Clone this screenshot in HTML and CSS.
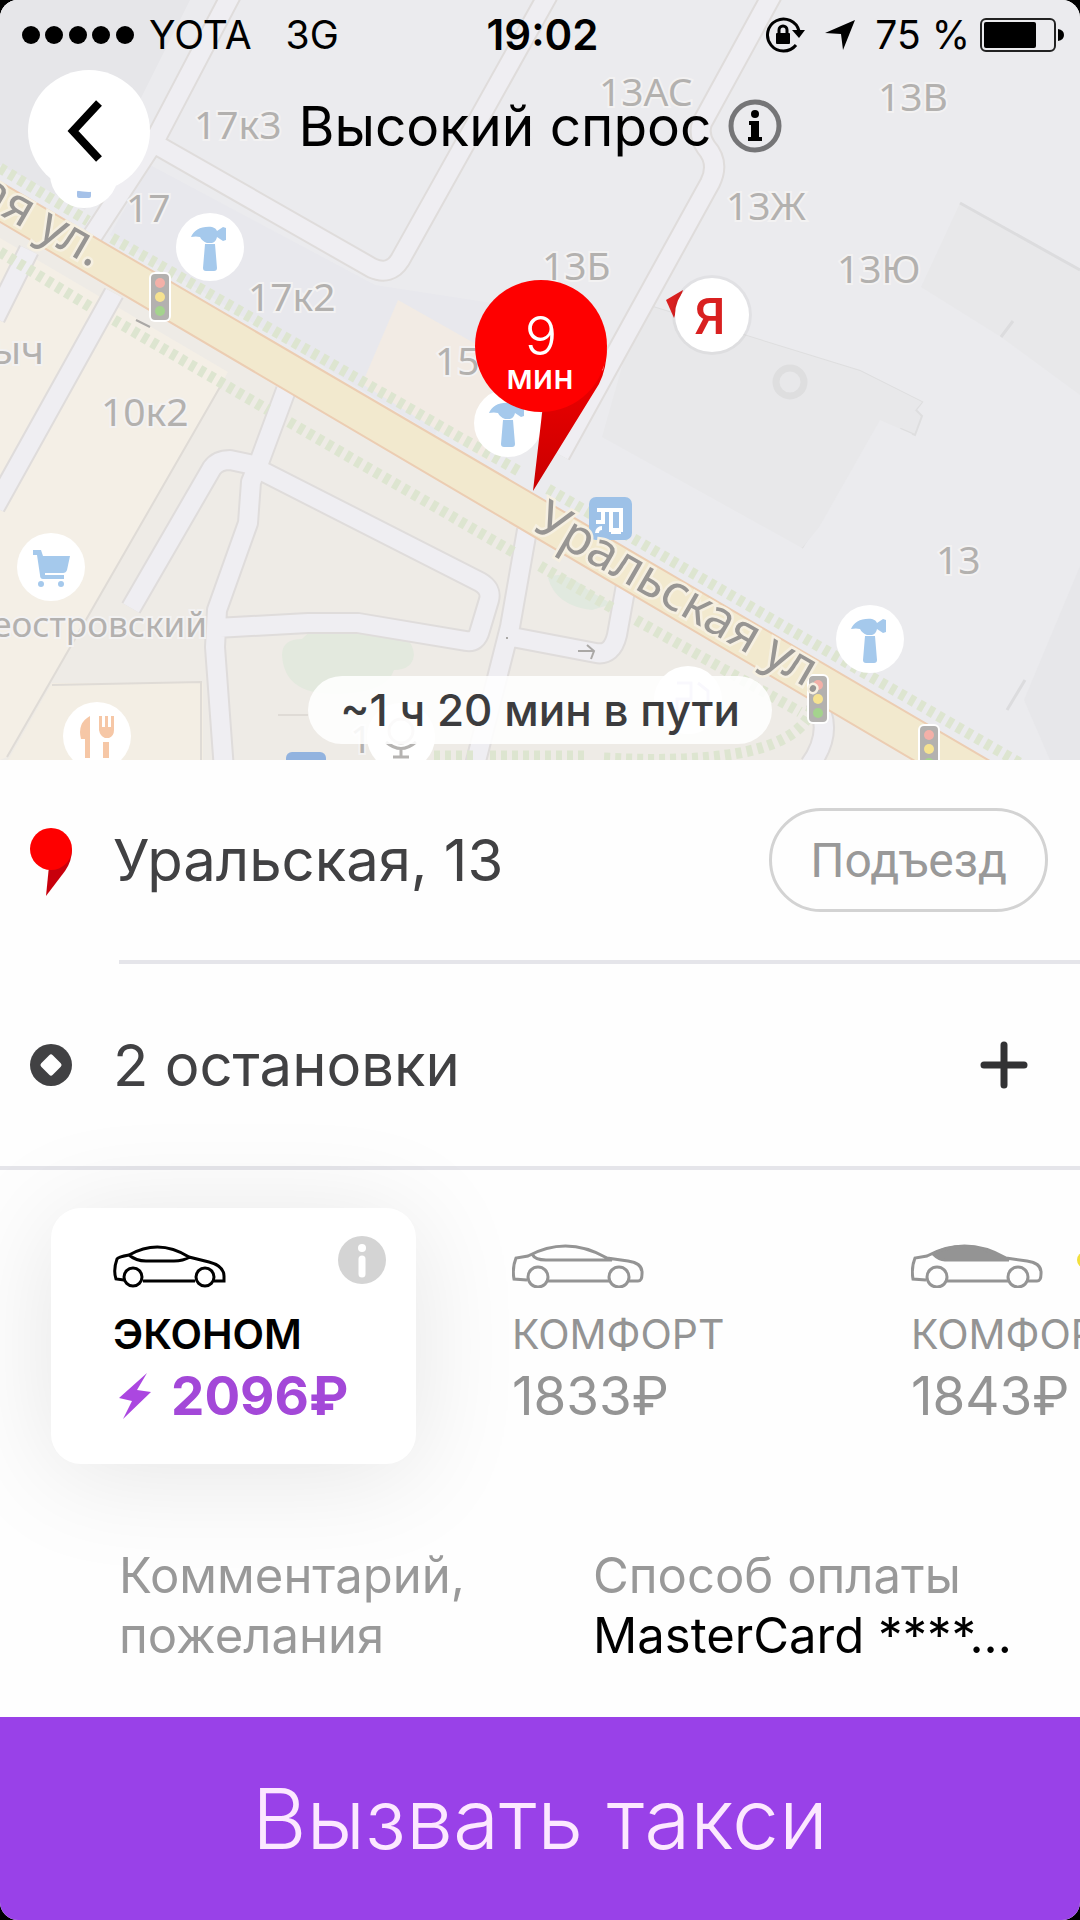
FILE: index.html
```html
<!DOCTYPE html>
<html lang="ru">
<head>
<meta charset="utf-8">
<meta name="viewport" content="width=device-width, initial-scale=1">
<title>Вызвать такси</title>
<link rel="stylesheet" href="styles.css">
</head>
<body>
<div class="app">
  <section class="map">
    <svg class="map__canvas" viewBox="0 0 1080 760" preserveAspectRatio="xMidYMid slice" aria-label="Карта">
      <defs>
        <symbol id="hammer" viewBox="-34 -34 68 68">
          <circle r="34" fill="#fff"/>
          <path fill="#a5c9ec" d="M-19-10C-16-17-9-21 2-20q4 1 5 4l6-4 3 1v12l-3 1-6-4q-1 5-5 6h-5q-5-2-7-6-4-1-9 0zM-5-3H5L7 21q0 3-3 3h-8q-3 0-3-3z"/>
        </symbol>
        <symbol id="light" viewBox="0 0 24 52">
          <rect x="1" y="1" width="22" height="50" rx="6" fill="#fff"/>
          <rect x="3" y="3" width="18" height="46" rx="4" fill="#b3b1af"/>
          <circle cx="12" cy="12" r="5" fill="#f3b0a8"/>
          <circle cx="12" cy="26" r="5" fill="#f5e291"/>
          <circle cx="12" cy="40" r="5" fill="#a4d38d"/>
        </symbol>
        <linearGradient id="tail" x1="0" y1="0" x2="0" y2="1">
          <stop offset="0" stop-color="#f40000"/><stop offset="1" stop-color="#c90000"/>
        </linearGradient>
      </defs>

      <rect width="1080" height="760" fill="#ebebee"/>
      <path fill="#e6e6e9" d="M0 0h190L85 210 0 165z"/>
      <path fill="#e8e8ed" d="M150 165l225 120 130 20-70 130L110 235z"/>
      <path fill="#e8e8ea" d="M960 203l120 67v125l-79-58-80-50z"/>
      <path fill="#e8e8ea" stroke="#dededf" stroke-width="2" d="M640 303l220 68 62 31-6 8 6 6-7 19-35-15-78 128"/>
      <path fill="#e8e8ea" d="M640 303l220 68 62 31-120 146-200-111z"/>
      <path fill="#ebebee" d="M880 420l32 14-85 130-22-12z"/>
      <path fill="#e7e7ea" d="M1080 566v194h-30l-26-60z"/>
      <path stroke="#dcdcde" stroke-width="3" fill="none" d="M960 203l120 67M1001 337l12-16M1025 680l-18 30"/>
      <circle cx="790" cy="382" r="14" fill="none" stroke="#dededf" stroke-width="7"/>
      <path fill="#f2ebe4" d="M398 300l92 52v110l-128-78z"/>

      <path fill="#eeebe6" d="M0 222l920 538H0z"/>
      <path fill="#f4efe6" d="M0 238l228 134L7 757 0 760z"/>
      <path fill="#f3eee4" d="M52 683h151v77H8z"/>
      <path fill="none" stroke="#dfdbd6" stroke-width="2" d="M220 387L7 757M52 685l149-3v78M278 715h30"/>
      <path fill="#e3e9de" d="M282 655q0-16 20-16 15-17 50-16 60 2 62 32-2 15-20 15-8 24-60 24-50 0-52-39z"/>
      <path fill="#e1e9df" d="M548 578q15-10 40 12l24 14-20 6q-36-4-44-32z"/>

      <g class="road-edge">
        <path d="M231-5L155 140 93 235M155 144l217 124q18 8 28-8L548-5M772-5L702 123q-4 12 4 24 14 16 4 36L560 455"/>
        <path d="M29 250L-5 318M114 293L-5 507M286 390l-26 70-9 22-3 41-31 87-2 37 9 123M258 466l-28-6q-12 0-18 8l-81 140M260 470l220 112q12 7 9 18l-9 30q-3 13-14 11l-108-18h-50l-92 5"/>
        <path d="M527 530l-17 97-35 138M512 637l84 16q16 3 21-18l9-50M815 700q20 30-5 65"/>
      </g>
      <g class="road">
        <path d="M231-5L155 140 93 235M155 144l217 124q18 8 28-8L548-5M772-5L702 123q-4 12 4 24 14 16 4 36L560 455"/>
        <path d="M29 250L-5 318M114 293L-5 507M286 390l-26 70-9 22-3 41-31 87-2 37 9 123M258 466l-28-6q-12 0-18 8l-81 140M260 470l220 112q12 7 9 18l-9 30q-3 13-14 11l-108-18h-50l-92 5"/>
        <path d="M527 530l-17 97-35 138M512 637l84 16q16 3 21-18l9-50M815 700q20 30-5 65"/>
      </g>

      <path fill="#f2e9ce" stroke="#eccdb2" stroke-width="2" d="M-5 179l1000 585h-75L-5 219z"/>
      <g class="trees">
        <path d="M0 168l88 53M112 238l410 235M548 489l480 279"/>
        <path d="M0 252l92 56M114 320l154 90M289 422l224 130M540 566l72 42M636 620l164 92"/>
        <path d="M434 756h40M490 756h96M604 758q190 10 208-50"/>
      </g>
      <path fill="none" stroke="#aaa8a6" stroke-width="2" d="M578 651h16m-7-6l7 6-3 8M506 638h2M136 320l14 7"/>

      <g class="map-label">
        <text x="194" y="139">17к3</text>
        <text x="126" y="222">17</text>
        <text x="248" y="311">17к2</text>
        <text x="435" y="375">15</text>
        <text x="44" y="364" text-anchor="end">ыч</text>
        <text x="599" y="106">13АС</text>
        <text x="878" y="111">13В</text>
        <text x="726" y="220">13Ж</text>
        <text x="542" y="280">13Б</text>
        <text x="837" y="283">13Ю</text>
        <text x="936" y="574">13</text>
        <text x="101" y="426">10к2</text>
        <text x="350" y="753">1</text>
        <text class="map-label--place" x="207" y="637" text-anchor="end">еостровский</text>
      </g>

      <circle cx="84" cy="174" r="34" fill="#fff"/>
      <rect x="77" y="190" width="14" height="8" rx="2" fill="#a5c1e8"/>
      <use href="#hammer" x="176" y="213" width="68" height="68"/>
      <use href="#hammer" x="474" y="389" width="68" height="68"/>
      <use href="#hammer" x="836" y="605" width="68" height="68"/>
      <use href="#light" x="148" y="271" width="24" height="52"/>
      <use href="#light" x="806" y="673" width="24" height="52"/>
      <use href="#light" x="917" y="723" width="24" height="52"/>
      <rect x="589" y="497" width="43" height="43" rx="7" fill="#9dc1e7"/>
      <path fill="none" stroke="#fff" stroke-width="4" d="M597 510h24v20h-10v-20M603 512v10h-7M597 533a5 5 0 0 1 5-5M611 532h10"/>

      <g class="street-label">
        <text transform="translate(531 529) rotate(30)">Уральская ул.</text>
        <text transform="translate(92 268) rotate(30)" text-anchor="end">Уральская ул.</text>
      </g>

      <g transform="translate(51 567)">
        <circle r="34" fill="#fff"/>
        <path fill="#a5c9ec" d="M-18-17h8l2 6h27l-3 14q-1 3-4 3H-6v2h19v4H-8q-3 0-3-4l-3-20h-4z"/>
        <circle cx="-10" cy="17" r="3" fill="#a5c9ec"/><circle cx="10" cy="17" r="3" fill="#a5c9ec"/>
      </g>
      <g transform="translate(97 736)">
        <circle r="34" fill="#fff"/>
        <path fill="#f6c7a6" d="M-7-20v42h-5V3h-4q-4-16 9-23zM2-20h3v11h3v-11h3v11h3v-11h3v14q0 6-5 8H8q-5-2-6-8zM6 6h6v16H6z"/>
      </g>
      <g transform="translate(401 737)">
        <circle r="34" fill="#fff"/>
        <circle cy="-6" r="12" fill="none" stroke="#d8d6d4" stroke-width="3"/>
        <path fill="none" stroke="#b5b3b1" stroke-width="3" d="M-15 5Q0 18 15 5M0 12v9M-8 20H8"/>
      </g>
      <circle cx="688" cy="700" r="34" fill="#fff"/>
      <path fill="none" stroke="#c9c4e8" stroke-width="3" d="M677 683h14v16h-14v16M698 683l10 8v16"/>
      <rect x="286" y="752" width="40" height="20" rx="6" fill="#92b3df"/>

      <path fill="#d92020" d="M666 300l17-10-9 28z"/>
      <circle cx="712" cy="315" r="40" fill="#000" opacity=".04"/>
      <circle cx="712" cy="315" r="37" fill="#fff"/>
      <text class="brand" x="710" y="334">Я</text>

      <path fill="url(#tail)" d="M543 405l60-35 4-24q0 22-8 38l-66 107z"/>
      <circle cx="541" cy="346" r="66" fill="#fe0000"/>
      <text class="eta__value" x="541" y="355">9</text>
      <text class="eta__unit" x="540" y="389">мин</text>
    </svg>

    <div class="status">
      <div class="status__side">
        <svg width="114" height="20" viewBox="0 0 114 20"><circle cx="10" cy="10" r="9"/><circle cx="33" cy="10" r="9"/><circle cx="57" cy="10" r="9"/><circle cx="80" cy="10" r="9"/><circle cx="104" cy="10" r="9"/></svg>
        <span>YOTA</span>
        <span>3G</span>
      </div>
      <time class="status__time">19:02</time>
      <div class="status__side status__side--end">
        <svg width="40" height="38" viewBox="0 0 40 38"><path fill="none" stroke="#000" stroke-width="3" d="M31 29A16 16 0 1 1 34 15"/><path d="M27 14h13l-6 8z"/><rect x="11" y="17" width="14" height="11" rx="1"/><path fill="none" stroke="#000" stroke-width="3" d="M14 18v-4a4 4 0 0 1 8 0v4"/></svg>
        <svg width="30" height="30" viewBox="0 0 30 30"><path d="M30 0L18 30 16 14 0 13z"/></svg>
        <span>75 %</span>
        <svg class="status__battery" width="84" height="34" viewBox="0 0 84 34"><rect x="1" y="1" width="74" height="32" rx="5" fill="none" stroke="#222" stroke-width="2"/><rect x="4" y="4" width="52" height="26" rx="2"/><path d="M78 11q6 1 6 6t-6 6z"/></svg>
      </div>
    </div>

    <header class="header">
      <button class="back" type="button" aria-label="Назад">
        <svg width="36" height="62" viewBox="0 0 36 62"><path fill="none" stroke="#000" stroke-width="8" d="M32 3L6 31l26 28"/></svg>
      </button>
      <div class="header__title">
        <h1>Высокий спрос</h1>
        <button class="info" type="button" aria-label="Подробнее о спросе">
          <svg width="54" height="54" viewBox="0 0 54 54"><circle cx="27" cy="27" r="24" fill="none" stroke="#757577" stroke-width="5"/><circle cx="27" cy="15" r="4"/><path d="M21 22h10v16h3v4H20v-4h3V26h-2z"/></svg>
        </button>
      </div>
    </header>

    <p class="duration">~1 ч 20 мин в пути</p>
  </section>

  <section class="route">
    <div class="route__row">
      <svg class="route__icon" width="42" height="68" viewBox="0 0 42 68"><path fill="#c8000c" d="M19 38l23-17q0 12-7 22L16 68z"/><circle cx="21" cy="21" r="21" fill="#fe0000"/></svg>
      <div class="route__body route__body--line">
        <span class="route__name">Уральская, 13</span>
        <button class="entrance" type="button">Подъезд</button>
      </div>
    </div>
    <div class="route__row">
      <svg class="route__icon" width="42" height="42" viewBox="0 0 42 42"><circle cx="21" cy="21" r="21" fill="#414143"/><path fill="#fff" stroke="#fff" stroke-width="5" stroke-linejoin="round" d="M21 13l8 8-8 8-8-8z"/></svg>
      <div class="route__body">
        <span class="route__name">2 остановки</span>
        <button class="add" type="button" aria-label="Добавить остановку">
          <svg width="48" height="48" viewBox="0 0 48 48"><path stroke="#323234" stroke-width="7" stroke-linecap="round" d="M24 4v40M4 24h40"/></svg>
        </button>
      </div>
    </div>
  </section>

  <section class="tariffs" aria-label="Тарифы">
    <div class="tariff tariff--active">
      <button class="tariff__pick" type="button">
        <svg width="113" height="44" viewBox="0 0 113 44"><g fill="none" stroke="currentColor" stroke-width="3"><path d="M11 36l-8-1q-3-9 1-20 1-2 12-4 30-17 60 2l20 5q15 4 15 14v5h-10M82 37H30M16 11q7 6 17 6h28q9 0 16-4"/><circle cx="20" cy="33" r="9"/><circle cx="92" cy="33" r="9"/></g></svg>
        <span class="tariff__name">ЭКОНОМ</span>
        <span class="tariff__price"><svg width="32" height="46" viewBox="0 0 32 46"><path fill="#ab47e0" d="M28 0L0 25l13 3-9 18 28-27-14-2z"/></svg>2096₽</span>
      </button>
      <button class="tariff__info" type="button" aria-label="О тарифе">
        <svg width="48" height="48" viewBox="0 0 48 48"><circle cx="24" cy="24" r="24" fill="#d4d4d4"/><circle cx="24" cy="12" r="4" fill="#fff"/><path stroke="#fff" stroke-width="7" stroke-linecap="round" d="M24 23v15"/></svg>
      </button>
    </div>
    <div class="tariff">
      <button class="tariff__pick" type="button">
        <svg width="132" height="44" viewBox="0 0 132 44"><g fill="none" stroke="currentColor" stroke-width="3"><path d="M15 36L2 35Q0 24 4 14l12-2Q55-9 95 14l21 3q15 2 14 13 0 7-4 7h-9M97 37H36M20 10q3 6 14 6h66"/><circle cx="26" cy="33" r="10"/><circle cx="107" cy="33" r="10"/></g></svg>
        <span class="tariff__name">КОМФОРТ</span>
        <span class="tariff__price">1833₽</span>
      </button>
    </div>
    <div class="tariff">
      <button class="tariff__pick" type="button">
        <svg width="182" height="44" viewBox="0 0 182 44"><g fill="none" stroke="currentColor" stroke-width="3"><path d="M15 36L2 35Q0 24 4 14l12-2Q55-9 95 14l21 3q15 2 14 13 0 7-4 7h-9M97 37H36"/><path fill="currentColor" d="M22 10q33-17 73 5l3 1H34q-6 0-12-6z"/><circle cx="26" cy="33" r="10"/><circle cx="107" cy="33" r="10"/></g><circle cx="174" cy="16" r="8" fill="#f2e03c"/></svg>
        <span class="tariff__name">КОМФОРТ+</span>
        <span class="tariff__price">1843₽</span>
      </button>
    </div>
  </section>

  <section class="options">
    <button class="option" type="button">Комментарий,<br>пожелания</button>
    <button class="option" type="button">Способ оплаты<br><span class="option__value">MasterCard ****...</span></button>
  </section>

  <div class="footer"><button class="order" type="button">Вызвать такси</button></div>
</div>
</body>
</html>
```

FILE: styles.css
```css
* {
  box-sizing: border-box;
}

html {
  background: #000;
}

body {
  margin: 0;
  font-family: Inter, "Liberation Sans", sans-serif;
  color: #000;
}

button {
  margin: 0;
  padding: 0;
  border: 0;
  background: none;
  color: inherit;
  font: inherit;
  text-align: left;
  cursor: pointer;
}

svg {
  display: block;
  flex-shrink: 0;
}

.app {
  display: flex;
  flex-direction: column;
  min-height: 100vh;
  overflow: hidden;
  border-radius: 18px;
  background: #fefefe;
}

/* Map */
.map {
  position: relative;
  display: flex;
  flex: 1 0 auto;
  flex-direction: column;
  min-height: 600px;
  overflow: hidden;
}

.map__canvas {
  position: absolute;
  inset: 0;
  width: 100%;
  height: 100%;
}

.road,
.road-edge {
  fill: none;
  stroke: #efeef2;
  stroke-width: 18px;
  stroke-linejoin: round;
}

.road-edge {
  stroke: #dfdcdb;
  stroke-width: 22px;
}

.trees {
  fill: none;
  stroke: #dde5d0;
  stroke-width: 11px;
  stroke-dasharray: 6 5;
}

.map-label {
  fill: #b3b1af;
  stroke: #f3f2f2;
  stroke-width: 4px;
  paint-order: stroke;
  font: 39px "Noto Sans", sans-serif;
}

.map-label--place {
  font-size: 35px;
}

.street-label {
  fill: #979593;
  stroke: #f6f0e2;
  stroke-width: 5px;
  paint-order: stroke;
  font: 50px "Noto Sans", sans-serif;
}

.brand {
  fill: #d92020;
  font: 500 50px Roboto, sans-serif;
  text-anchor: middle;
}

.eta__value,
.eta__unit {
  fill: #fff;
  text-anchor: middle;
}

.eta__value {
  font-size: 54px;
  font-weight: 300;
}

.eta__unit {
  font-size: 34px;
  font-weight: 500;
}

.status {
  position: relative;
  display: grid;
  grid-template-columns: 1fr auto 1fr;
  align-items: center;
  height: 70px;
  padding: 0 16px 0 21px;
  font-size: 39px;
  line-height: 48px;
}

.status__side {
  display: flex;
  align-items: center;
  gap: 34px;
}

.status__side svg:first-child {
  margin-right: -20px;
}

.status__side--end {
  justify-content: flex-end;
  gap: 20px;
}

.status__side--end svg:first-child {
  margin-right: 0;
}

.status__battery {
  margin-left: -10px;
}

.status__time {
  font-size: 42px;
  font-weight: 600;
}

.header {
  position: relative;
  display: grid;
  grid-template-columns: 122px 1fr 122px;
  align-items: center;
  padding: 0 28px;
}

.back {
  display: flex;
  align-items: center;
  justify-content: center;
  width: 122px;
  height: 122px;
  border-radius: 50%;
  background: #fff;
}

.back svg {
  margin-right: 8px;
}

.header__title {
  display: flex;
  align-items: center;
  justify-content: center;
  gap: 16px;
  padding-bottom: 10px;
}

h1 {
  margin: 0;
  font-size: 55px;
  font-weight: 400;
  line-height: 64px;
}

.duration {
  position: relative;
  align-self: center;
  margin: auto 0 16px;
  padding: 0 32px;
  border-radius: 34px;
  background: rgba(255, 255, 255, 0.88);
  color: #3c3c3e;
  font-size: 44px;
  font-weight: 500;
  line-height: 68px;
}

/* Route */
.route {
  border-bottom: 4px solid #e5e5ea;
  color: #414143;
}

.route__row {
  display: flex;
  align-items: center;
  gap: 47px;
  padding-left: 30px;
}

.route__body {
  display: flex;
  flex: 1;
  align-items: center;
  justify-content: space-between;
  height: 202px;
  padding-right: 32px;
}

.route__body--line {
  height: 204px;
  border-bottom: 4px solid #e5e5ea;
}

.route__name {
  margin-left: -6px;
  font-size: 58px;
  line-height: 68px;
}

.entrance {
  height: 104px;
  padding: 0 38px;
  border: 3px solid #d3d3d3;
  border-radius: 52px;
  color: #999;
  font-family: Roboto, sans-serif;
  font-size: 48px;
}

.add {
  margin-right: 20px;
}

/* Tariffs */
.tariffs {
  display: flex;
  gap: 34px;
  padding: 38px 0 38px 51px;
}

.tariff {
  position: relative;
  flex: 0 0 365px;
  height: 256px;
  padding: 36px 0 0 62px;
  border-radius: 30px;
  color: #949494;
  font-size: 41px;
}

.tariff--active {
  background: #fff;
  box-shadow: 0 10px 110px rgba(0, 0, 0, 0.1);
  color: #000;
}

.tariff__pick {
  display: flex;
  flex-direction: column;
}

.tariff__name {
  margin-top: 22px;
  line-height: 48px;
  white-space: nowrap;
}

.tariff__price {
  display: flex;
  align-items: center;
  gap: 20px;
  font-size: 53px;
  line-height: 76px;
}

.tariff--active .tariff__name {
  font-weight: 600;
}

.tariff--active .tariff__price {
  padding-left: 6px;
  color: #a348d8;
  font-weight: 700;
}

.tariff__info {
  position: absolute;
  top: 28px;
  right: 30px;
}

/* Options */
.options {
  display: grid;
  grid-template-columns: 474px 1fr;
  padding: 44px 32px 51px 119px;
  color: #999;
  font-size: 49px;
  line-height: 60px;
}

.option {
  white-space: nowrap;
}

.option__value {
  color: #000;
}

.footer {
  background: #9941e8;
}

.order {
  display: block;
  width: 100%;
  height: 203px;
  color: #fce8ff;
  font-size: 84px;
  font-weight: 300;
  text-align: center;
}
```
